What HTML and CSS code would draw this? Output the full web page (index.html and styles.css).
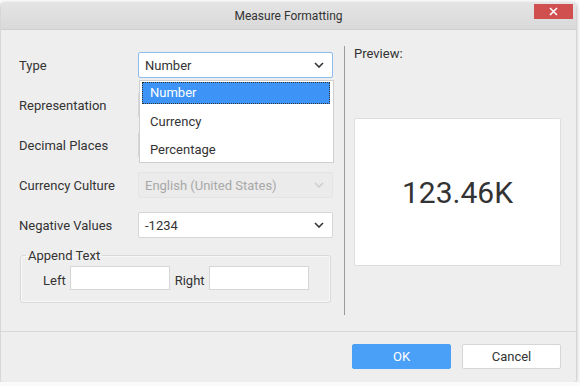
FILE: index.html
```html
<!DOCTYPE html>
<html lang="en">
<head>
    <meta charset="UTF-8">
    <title>Measure Formatting</title>
    <link rel="stylesheet" href="styles.css">
</head>
<body>
    <div class="backdrop">
        <div class="dialog">
            <!-- Title bar -->
            <div class="titlebar">
                <span class="title">Measure Formatting</span>
                <button class="close-btn" aria-label="Close">
                    <svg width="9" height="9" viewBox="0 0 9 9"><path d="M1 1L8 8M8 1L1 8" stroke="#fff" stroke-width="1.6"/></svg>
                </button>
            </div>

            <div class="content">
                <!-- Settings form -->
                <div class="form">
                    <div class="row">
                        <label class="row-label">Type</label>
                        <div class="select focused">
                            <span>Number</span>
                            <svg class="chevron" width="10" height="6" viewBox="0 0 10 6"><path d="M1 1L5 5L9 1" fill="none" stroke="#333" stroke-width="1.6"/></svg>
                        </div>
                        <ul class="dropdown">
                            <li class="selected">Number</li>
                            <li>Currency</li>
                            <li>Percentage</li>
                        </ul>
                    </div>
                    <div class="row">
                        <label class="row-label">Representation</label>
                        <div class="select"></div>
                    </div>
                    <div class="row">
                        <label class="row-label">Decimal Places</label>
                        <div class="select"></div>
                    </div>
                    <div class="row">
                        <label class="row-label">Currency Culture</label>
                        <div class="select disabled">
                            <span>English (United States)</span>
                            <svg class="chevron" width="10" height="6" viewBox="0 0 10 6"><path d="M1 1L5 5L9 1" fill="none" stroke="#ccc" stroke-width="1.4"/></svg>
                        </div>
                    </div>
                    <div class="row">
                        <label class="row-label">Negative Values</label>
                        <div class="select">
                            <span>-1234</span>
                            <svg class="chevron" width="10" height="6" viewBox="0 0 10 6"><path d="M1 1L5 5L9 1" fill="none" stroke="#333" stroke-width="1.6"/></svg>
                        </div>
                    </div>
                    <fieldset class="append">
                        <legend>Append Text</legend>
                        <label class="first">Left</label>
                        <input type="text" class="text-input">
                        <label>Right</label>
                        <input type="text" class="text-input">
                    </fieldset>
                </div>

                <div class="divider"></div>

                <!-- Preview panel -->
                <div class="preview">
                    <div class="preview-label">Preview:</div>
                    <div class="preview-box">123.46K</div>
                </div>
            </div>

            <div class="footer">
                <button class="btn btn-primary">OK</button>
                <button class="btn">Cancel</button>
            </div>
        </div>
    </div>
</body>
</html>
```

FILE: styles.css
```css
body {
    margin: 0;
    padding: 0;
    background-color: #fafafa;
    font-family: Roboto, "Liberation Sans", sans-serif;
    color: #333;
}
.backdrop {
    padding: 3px 0 0 1px;
}
.dialog {
    width: 575px;
    height: 379px;
    background-color: #eeeeee;
    box-shadow: 0 1px 4px rgba(0, 0, 0, 0.35);
    border-radius: 2px;
    display: flex;
    flex-direction: column;
}
.titlebar {
    position: relative;
    height: 26px;
    background: linear-gradient(#e4e4e4, #d9d9d9);
    border-bottom: 1px solid #cfcfcf;
    display: flex;
    align-items: center;
    justify-content: center;
}
.title {
    font-size: 12px;
    color: #333;
}
.close-btn {
    position: absolute;
    top: 1px;
    right: 3px;
    width: 39px;
    height: 15px;
    border: none;
    padding: 0;
    background-color: #d05050;
    display: flex;
    align-items: center;
    justify-content: center;
}
.content {
    height: 301px;
    display: flex;
    border-bottom: 1px solid #d8d8d8;
}
.form {
    width: 314px;
    padding: 22px 11px 0 18px;
}
.row {
    position: relative;
    display: flex;
    align-items: center;
    height: 26px;
    margin-bottom: 14px;
}
.row-label {
    width: 119px;
    font-size: 13px;
}
.select {
    width: 195px;
    height: 26px;
    box-sizing: border-box;
    border: 1px solid #d6d6d6;
    background-color: #fff;
    display: flex;
    align-items: center;
    justify-content: space-between;
    padding: 0 8px 0 6px;
    font-size: 13px;
    border-radius: 2px;
}
.select.focused {
    border-color: #8cbcec;
}
.select.disabled {
    background-color: #ebebeb;
    border-color: #e4e4e4;
    color: #a8a8a8;
}
.dropdown {
    position: absolute;
    left: 120px;
    top: 28px;
    width: 195px;
    margin: 0;
    padding: 1px 3px 0 2px;
    box-sizing: border-box;
    list-style: none;
    background-color: #fff;
    border: 1px solid #cfcfcf;
    z-index: 2;
    font-size: 13px;
}
.dropdown li {
    height: 28px;
    line-height: 28px;
    padding-left: 8px;
}
.dropdown li:last-child {
    height: 26px;
}
.dropdown li.selected {
    height: 22px;
    line-height: 22px;
    margin-bottom: 4px;
    background-color: #3d94f6;
    color: #fff;
    outline: 1px dotted #333;
    outline-offset: -1px;
}
.append {
    margin: -4px 0 0 1px;
    width: 311px;
    box-sizing: border-box;
    height: 55px;
    padding: 0 0 4px 0;
    border: 1px solid #d9d9d9;
    box-shadow: inset 0 0 0 1px #f8f8f8;
    border-radius: 3px;
    display: flex;
    align-items: center;
    font-size: 13px;
}
.append legend {
    padding: 0 2px;
    margin-left: 5px;
}
.append label {
    margin-right: 4px;
}
.append label.first {
    margin-left: 22px;
}
.text-input {
    width: 100px;
    height: 24px;
    box-sizing: border-box;
    border: 1px solid #d6d6d6;
    background-color: #fff;
    margin: -6px 5px 0 0;
    padding: 0;
}
.divider {
    width: 1px;
    margin: 16px 0 16px 0;
    background-color: #9a9a9a;
}
.preview {
    padding: 16px 0 0 9px;
}
.preview-label {
    font-size: 13px;
    height: 72px;
}
.preview-box {
    width: 207px;
    height: 148px;
    box-sizing: border-box;
    background-color: #fff;
    border: 1px solid #dedede;
    border-radius: 2px;
    display: flex;
    align-items: center;
    justify-content: center;
    font-size: 30px;
    color: #333;
}
.footer {
    display: flex;
    justify-content: flex-end;
    gap: 11px;
    padding: 12px 15px 0 0;
}
.btn {
    width: 99px;
    height: 25px;
    border: 1px solid #d6d6d6;
    border-radius: 2px;
    background-color: #fff;
    font-family: Roboto, "Liberation Sans", sans-serif;
    font-size: 13px;
    color: #333;
}
.btn-primary {
    background-color: #4aa0f7;
    border-color: #4aa0f7;
    color: #fff;
}
```
